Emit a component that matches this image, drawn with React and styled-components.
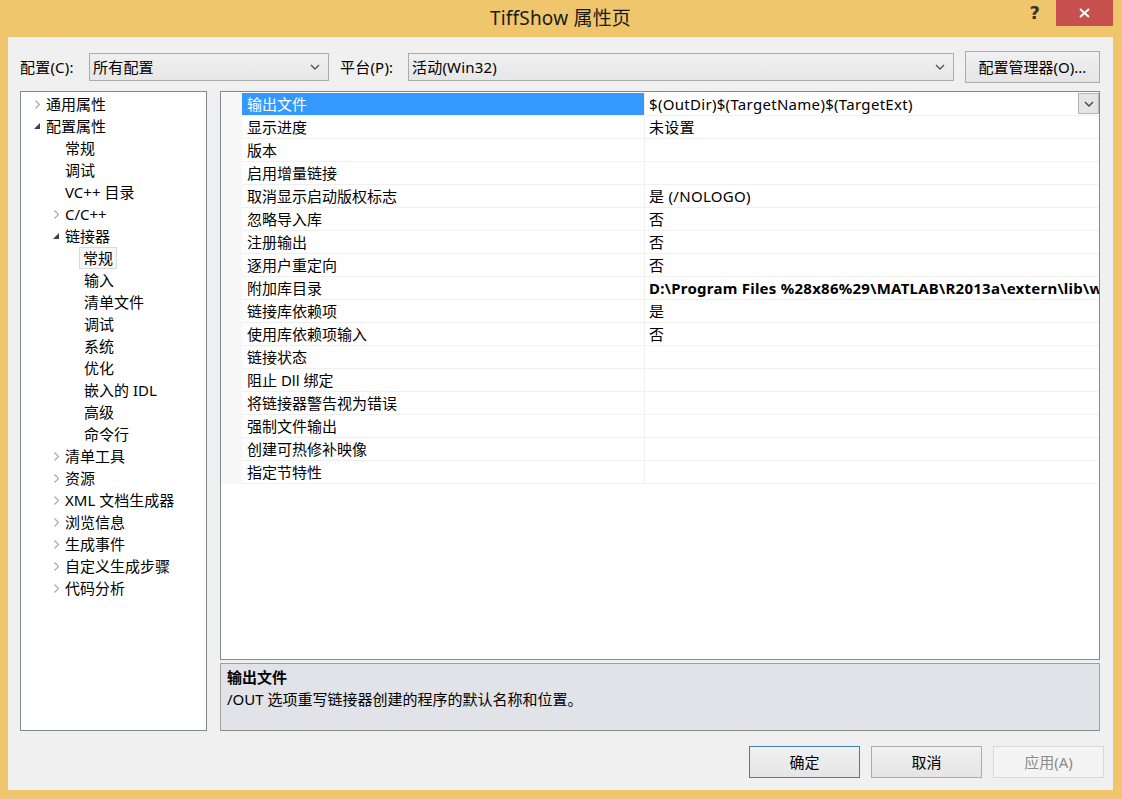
import React from "react";
import styled, { createGlobalStyle } from "styled-components";

const Global = createGlobalStyle`
  html, body { margin: 0; padding: 0; background: #efc66b; }
  body { font-family: "Noto Sans", "Noto Sans CJK SC", sans-serif; font-size: 15px; color: #000; }
  * { box-sizing: border-box; }
`;

const Window = styled.div`
  width: 1122px;
  height: 799px;
  background: #efc66b;
  display: flex;
  flex-direction: column;
  padding: 0 9px 9px 8px;
  position: relative;
  overflow: hidden;
`;

const TitleBar = styled.div`
  height: 37px;
  flex: none;
  display: flex;
  align-items: center;
  justify-content: center;
  font-size: 19px;
  letter-spacing: 0.2px;
  color: #1a1a1a;
  padding-bottom: 3px;
`;

const HelpBtn = styled.div`
  position: absolute;
  top: 2px;
  right: 82px;
  font-weight: bold;
  font-size: 18px;
  color: #333;
  font-family: "DejaVu Sans", sans-serif;
`;

const CloseBtn = styled.div`
  position: absolute;
  top: 0;
  right: 9px;
  width: 57px;
  height: 26px;
  background: #c7504f;
  display: flex;
  align-items: center;
  justify-content: center;
`;

const Body = styled.div`
  flex: 1;
  background: #f0f0f0;
  display: flex;
  flex-direction: column;
  padding: 14px 13px 12px 12px;
  min-height: 0;
`;

const TopRow = styled.div`
  height: 32px;
  display: flex;
  align-items: center;
  flex: none;
`;

const Label = styled.span`
  width: ${(p) => p.$w}px;
  flex: none;
  line-height: 20px;
  white-space: nowrap;
  letter-spacing: 0.2px;
`;

const Select = styled.div`
  height: 28px;
  width: ${(p) => (p.$w ? p.$w + "px" : "auto")};
  flex: ${(p) => (p.$w ? "none" : "1")};
  border: 1px solid #acacac;
  background: linear-gradient(#f0f0f0, #e7e7e7);
  display: flex;
  align-items: center;
  padding: 0 8px 0 3px;
  margin-right: 11px;
  justify-content: space-between;
  line-height: 20px;
  letter-spacing: 0.2px;
`;

const Button = styled.div`
  height: 32px;
  width: ${(p) => p.$w}px;
  flex: none;
  border: 1px solid ${(p) => (p.$default ? "#3c7fb1" : p.$disabled ? "#d9d9d9" : "#acacac")};
  background: ${(p) => (p.$disabled ? "#f4f4f4" : "linear-gradient(#f0f0f0, #e5e5e5)")};
  color: ${(p) => (p.$disabled ? "#8b8b8b" : "#000")};
  display: flex;
  align-items: center;
  justify-content: center;
  line-height: 20px;
  white-space: nowrap;
`;

const Main = styled.div`
  flex: 1;
  display: flex;
  margin-top: 8px;
  gap: 13px;
  min-height: 0;
`;

const Tree = styled.div`
  width: 187px;
  flex: none;
  background: #fff;
  border: 1px solid #828790;
  padding-top: 1px;
  display: flex;
  flex-direction: column;
`;

const TreeRow = styled.div`
  height: 22px;
  display: flex;
  align-items: center;
  padding-left: ${(p) => 8 + p.$level * 19}px;
`;

const Arrow = styled.span`
  width: 16px;
  height: 22px;
  flex: none;
  display: flex;
  align-items: center;
  justify-content: center;
`;

const TreeText = styled.span`
  line-height: 20px;
  white-space: nowrap;
  padding: 0 ${(p) => (p.$sel ? "3px" : "0")};
  margin-left: ${(p) => (p.$sel ? "-4px" : "0")};
  border: 1px solid ${(p) => (p.$sel ? "#dadada" : "transparent")};
  background: ${(p) => (p.$sel ? "#f7f7f7" : "transparent")};
`;

const RightCol = styled.div`
  flex: 1;
  display: flex;
  flex-direction: column;
  gap: 3px;
  min-width: 0;
`;

const Grid = styled.div`
  flex: 1;
  background: #fff;
  border: 1px solid #828790;
  padding-top: 1px;
  display: flex;
  flex-direction: column;
  overflow: hidden;
`;

const GridRow = styled.div`
  display: flex;
  height: 23px;
  flex: none;
`;

const Gutter = styled.div`
  width: 21px;
  flex: none;
  background: #f7f7f7;
`;

const NameCell = styled.div`
  width: 403px;
  flex: none;
  border-right: 1px solid #f0f0f0;
  border-bottom: 1px solid #f0f0f0;
  background: ${(p) => (p.$sel ? "#3399ff" : "#fff")};
  color: ${(p) => (p.$sel ? "#fff" : "#000")};
  padding-left: 5px;
  line-height: 22px;
  white-space: nowrap;
  overflow: hidden;
`;

const ValueCell = styled.div`
  flex: 1;
  min-width: 0;
  border-bottom: 1px solid #f0f0f0;
  padding-left: 4px;
  line-height: 22px;
  white-space: nowrap;
  overflow: hidden;
  letter-spacing: ${(p) => (p.$bold ? "0.25px" : "0.3px")};
  font-weight: ${(p) => (p.$bold ? "bold" : "normal")};
  display: flex;
  justify-content: space-between;
`;

const ValueText = styled.span`
  overflow: hidden;
`;

const DropBtn = styled.span`
  width: 21px;
  height: 21px;
  flex: none;
  background: #e5e5e5;
  border: 1px solid #b5b5b5;
  display: flex;
  align-items: center;
  justify-content: center;
`;

const Desc = styled.div`
  height: 68px;
  flex: none;
  background: #e1e3e8;
  border: 1px solid #a0a0a0;
  border-bottom-color: #8a8a8a;
  padding: 2px 6px;
  line-height: 22px;
`;

const DescTitle = styled.div`
  font-weight: bold;
`;

const Footer = styled.div`
  display: flex;
  justify-content: flex-end;
  gap: 11px;
  margin-top: 15px;
  margin-right: -4px;
  flex: none;
`;

const Chevron = ({ color = "#555" }) => (
  <svg width="10" height="6" viewBox="0 0 10 6">
    <polyline points="1,1 5,5 9,1" fill="none" stroke={color} strokeWidth="1.4" />
  </svg>
);

const Collapsed = () => (
  <svg width="5" height="9" viewBox="0 0 5 9">
    <polyline points="0.5,0.5 4.5,4.5 0.5,8.5" fill="none" stroke="#a6a6a6" strokeWidth="1.1" />
  </svg>
);

const Expanded = () => (
  <svg width="6" height="6" viewBox="0 0 6 6">
    <polygon points="6,0 6,6 0,6" fill="#404040" />
  </svg>
);

const treeItems = [
  [0, "c", "通用属性"],
  [0, "e", "配置属性"],
  [1, "", "常规"],
  [1, "", "调试"],
  [1, "", "VC++ 目录"],
  [1, "c", "C/C++"],
  [1, "e", "链接器"],
  [2, "", "常规", true],
  [2, "", "输入"],
  [2, "", "清单文件"],
  [2, "", "调试"],
  [2, "", "系统"],
  [2, "", "优化"],
  [2, "", "嵌入的 IDL"],
  [2, "", "高级"],
  [2, "", "命令行"],
  [1, "c", "清单工具"],
  [1, "c", "资源"],
  [1, "c", "XML 文档生成器"],
  [1, "c", "浏览信息"],
  [1, "c", "生成事件"],
  [1, "c", "自定义生成步骤"],
  [1, "c", "代码分析"],
];

const rows = [
  ["输出文件", "$(OutDir)$(TargetName)$(TargetExt)"],
  ["显示进度", "未设置"],
  ["版本", ""],
  ["启用增量链接", ""],
  ["取消显示启动版权标志", "是 (/NOLOGO)"],
  ["忽略导入库", "否"],
  ["注册输出", "否"],
  ["逐用户重定向", "否"],
  ["附加库目录", "D:\\Program Files %28x86%29\\MATLAB\\R2013a\\extern\\lib\\win32\\microsoft;%(AdditionalLibraryDirectories)", true],
  ["链接库依赖项", "是"],
  ["使用库依赖项输入", "否"],
  ["链接状态", ""],
  ["阻止 Dll 绑定", ""],
  ["将链接器警告视为错误", ""],
  ["强制文件输出", ""],
  ["创建可热修补映像", ""],
  ["指定节特性", ""],
];

export default function App() {
  return (
    <>
      <Global />
      <Window>
        <TitleBar>TiffShow 属性页</TitleBar>
        <HelpBtn>?</HelpBtn>
        <CloseBtn>
          <svg width="11" height="10" viewBox="0 0 11 10">
            <path d="M1 1 L10 9 M10 1 L1 9" stroke="#fff" strokeWidth="2" />
          </svg>
        </CloseBtn>
        <Body>
          <TopRow>
            <Label $w={69}>配置(C):</Label>
            <Select $w={240}>
              <span>所有配置</span>
              <Chevron />
            </Select>
            <Label $w={68}>平台(P):</Label>
            <Select>
              <span>活动(Win32)</span>
              <Chevron />
            </Select>
            <Button $w={135}>配置管理器(O)...</Button>
          </TopRow>
          <Main>
            <Tree>
              {treeItems.map(([lvl, arrow, text, sel], i) => (
                <TreeRow key={i} $level={lvl}>
                  <Arrow>{arrow === "c" ? <Collapsed /> : arrow === "e" ? <Expanded /> : null}</Arrow>
                  <TreeText $sel={sel}>{text}</TreeText>
                </TreeRow>
              ))}
            </Tree>
            <RightCol>
              <Grid>
                {rows.map(([name, value, bold], i) => (
                  <GridRow key={i}>
                    <Gutter />
                    <NameCell $sel={i === 0}>{name}</NameCell>
                    <ValueCell $bold={bold}>
                      <ValueText>{value}</ValueText>
                      {i === 0 && (
                        <DropBtn>
                          <Chevron color="#444" />
                        </DropBtn>
                      )}
                    </ValueCell>
                  </GridRow>
                ))}
              </Grid>
              <Desc>
                <DescTitle>输出文件</DescTitle>
                <div>/OUT 选项重写链接器创建的程序的默认名称和位置。</div>
              </Desc>
            </RightCol>
          </Main>
          <Footer>
            <Button $w={111} $default>确定</Button>
            <Button $w={111}>取消</Button>
            <Button $w={111} $disabled>应用(A)</Button>
          </Footer>
        </Body>
      </Window>
    </>
  );
}
